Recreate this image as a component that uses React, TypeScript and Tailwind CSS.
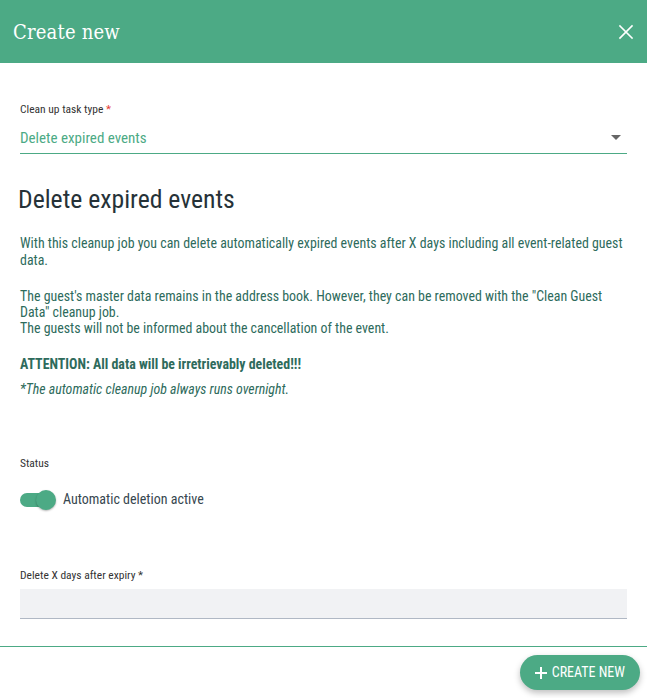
import React from "react";

export default function App() {
  const cond = { fontFamily: '"Roboto Condensed", "Liberation Sans Narrow", "Arial Narrow", Roboto, sans-serif' };
  return (
    <div className="w-[647px] h-[698px] bg-white flex flex-col overflow-hidden" style={cond}>
      <div className="h-[63px] bg-[#4caa85] flex items-center justify-between pl-[13px] pr-[12px] shrink-0">
        <div className="text-white text-[20px] tracking-[0.2px]" style={{ fontFamily: '"Roboto Slab", "DejaVu Serif Condensed", "DejaVu Serif", serif' }}>Create new</div>
        <svg width="18" height="18" viewBox="0 0 24 24" fill="none" stroke="white" strokeWidth="2.2" strokeLinecap="square">
          <path d="M4 4L20 20M20 4L4 20" />
        </svg>
      </div>
      <div className="flex-1 px-[20px] pt-[39px]">
        <div className="text-[11.5px] text-[#333] leading-[14px]">Clean up task type <span className="text-[#e53935]">*</span></div>
        <div className="mt-[13px] flex items-center justify-between border-b border-[#4caa85] pb-[6px]">
          <div className="text-[15px] text-[#4caa85] leading-[18px]">Delete expired events</div>
          <svg width="12" height="8" viewBox="0 0 12 8" className="mr-[5px]"><path d="M1 1h10L6 6z" fill="#666" /></svg>
        </div>
        <div className="mt-[29px] -ml-[2px] text-[25.7px] text-[#263238] leading-[32px]">Delete expired events</div>
        <div className="mt-[20px] text-[13.9px] text-[#2e6b5c] leading-[17px]">
          <p>With this cleanup job you can delete automatically expired events after X days including all event-related guest data.</p>
          <p className="mt-[19px] leading-[16px]">The guest's master data remains in the address book. However, they can be removed with the "Clean Guest Data" cleanup job.<br />The guests will not be informed about the cancellation of the event.</p>
          <p className="mt-[20px] font-bold">ATTENTION: All data will be irretrievably deleted!!!</p>
          <p className="mt-[8px] italic">*The automatic cleanup job always runs overnight.</p>
        </div>
        <div className="mt-[58px] text-[11.5px] text-[#333] leading-[14px]">Status</div>
        <div className="mt-[19px] flex items-center gap-[7px]">
          <div className="relative w-[36px] h-[20px] flex items-center">
            <div className="w-[34px] h-[14px] rounded-full bg-[#4caa85]" />
            <div className="absolute right-0 top-0 w-[20px] h-[20px] rounded-full bg-[#4caa85] shadow-[0_1px_2px_rgba(0,0,0,0.3)]" />
          </div>
          <div className="text-[14px] text-[#37474f]">Automatic deletion active</div>
        </div>
        <div className="mt-[58px] text-[11.5px] text-[#333] leading-[14px]">Delete X days after expiry <span className="text-[#333]">*</span></div>
        <div className="mt-[7px] h-[30px] bg-[#f1f2f4] border-b border-[#b0b8c4]" />
      </div>
      <div className="h-[52px] border-t border-[#4caa85] flex items-start justify-end pr-[7px] pt-[8px] shrink-0">
        <button className="h-[35px] px-[15px] rounded-full bg-[#4caa85] text-white text-[14px] flex items-center gap-[5px] shadow-[0_3px_6px_rgba(0,0,0,0.25)]">
          <svg width="12" height="12" viewBox="0 0 12 12"><path d="M6 0v12M0 6h12" stroke="white" strokeWidth="2" /></svg>
          CREATE NEW
        </button>
      </div>
    </div>
  );
}
